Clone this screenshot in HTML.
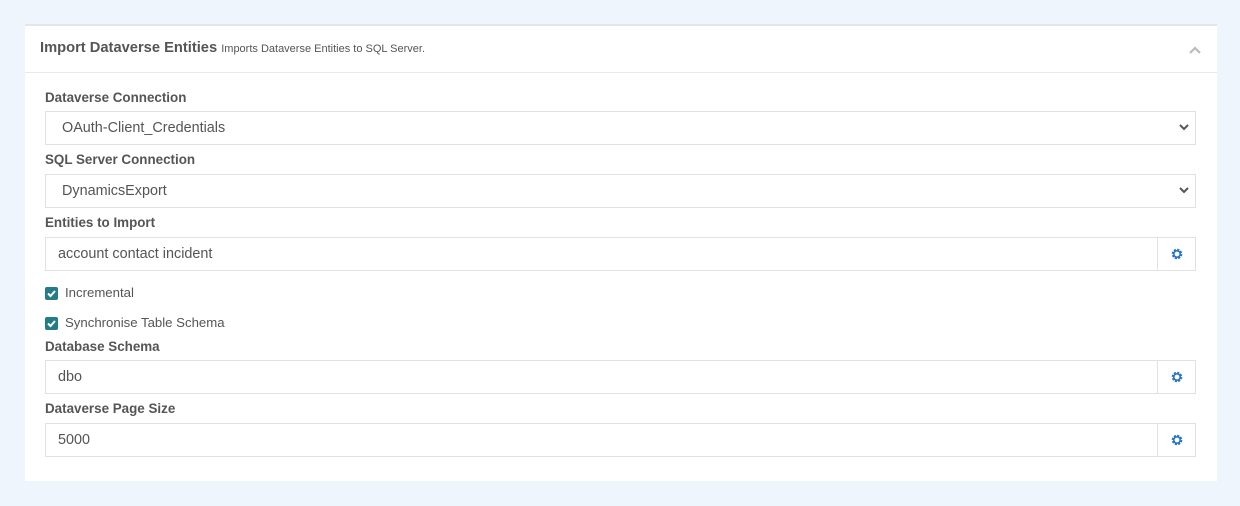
<!DOCTYPE html>
<html><head><style>
body{margin:0;background:#eef5fd;font-family:"Liberation Sans",sans-serif;width:1240px;height:506px;position:relative;overflow:hidden}
.card{position:absolute;left:25px;top:24px;width:1192px;height:455px;background:#fff;border-top:2px solid #e3e7ec}
.hdr{position:absolute;left:0;top:0;width:1192px;height:46px;border-bottom:1px solid #e6e9ed}
.t{position:absolute;left:15px;top:14px;font-size:14.7px;font-weight:bold;color:#555}
.t span{font-weight:normal;font-size:11px;color:#555}
.chev{position:absolute;left:1164px;top:20px}
.lab{position:absolute;left:20px;font-size:13.4px;font-weight:bold;color:#555}
.inp{position:absolute;left:20px;width:1149px;height:32px;border:1px solid #e1e1e1;font-size:14.4px;color:#555;line-height:32px;box-sizing:content-box}
.inp .v{position:absolute;left:12px;top:0}
.sel .v{left:16px}
.sel svg{position:absolute;right:6px;top:12px}
.add{position:absolute;right:0;top:0;width:37px;height:32px;border-left:1px solid #e1e1e1}
.add svg{position:absolute;left:13px;top:10px}
.cb{position:absolute;left:20px;font-size:13.2px;color:#555}
.cb i{position:absolute;left:0;top:0;width:13px;height:13px;background:#237c87;border-radius:2px}
.cb span{position:absolute;left:20px;top:-2px;white-space:nowrap}
</style></head><body>
<div class="card">
<div class="hdr"><div class="t">Import Dataverse Entities <span>Imports Dataverse Entities to SQL Server.</span></div>
<svg class="chev" width="12" height="8" viewBox="0 0 12 8"><path d="M1 7L6 2L11 7" stroke="#bbb" stroke-width="2.2" fill="none"/></svg></div>
<div class="lab" style="top:64px">Dataverse Connection</div>
<div class="inp sel" style="top:85px"><span class="v">OAuth-Client_Credentials</span><svg width="10" height="7" viewBox="0 0 10 7"><path d="M1 1L5 5L9 1" stroke="#555" stroke-width="2" fill="none"/></svg></div>
<div class="lab" style="top:126px">SQL Server Connection</div>
<div class="inp sel" style="top:148px"><span class="v">DynamicsExport</span><svg width="10" height="7" viewBox="0 0 10 7"><path d="M1 1L5 5L9 1" stroke="#555" stroke-width="2" fill="none"/></svg></div>
<div class="lab" style="top:189px">Entities to Import</div>
<div class="inp" style="top:211px"><span class="v">account contact incident</span><div class="add"><svg width="12" height="12" viewBox="0 0 12 12"><circle cx="6" cy="6" r="4" fill="none" stroke="#2a74c4" stroke-width="2.6" stroke-dasharray="2 1.14"/><circle cx="6" cy="6" r="3.2" fill="none" stroke="#2a74c4" stroke-width="1.6"/></svg></div></div>
<div class="cb" style="top:261px"><i><svg width="13" height="13" viewBox="0 0 13 13"><path d="M3 6.5L5.5 9L10 4" stroke="#fff" stroke-width="2" fill="none"/></svg></i><span>Incremental</span></div>
<div class="cb" style="top:291px"><i><svg width="13" height="13" viewBox="0 0 13 13"><path d="M3 6.5L5.5 9L10 4" stroke="#fff" stroke-width="2" fill="none"/></svg></i><span>Synchronise Table Schema</span></div>
<div class="lab" style="top:313px">Database Schema</div>
<div class="inp" style="top:334px"><span class="v">dbo</span><div class="add"><svg width="12" height="12" viewBox="0 0 12 12"><circle cx="6" cy="6" r="4" fill="none" stroke="#2a74c4" stroke-width="2.6" stroke-dasharray="2 1.14"/><circle cx="6" cy="6" r="3.2" fill="none" stroke="#2a74c4" stroke-width="1.6"/></svg></div></div>
<div class="lab" style="top:375px">Dataverse Page Size</div>
<div class="inp" style="top:397px"><span class="v">5000</span><div class="add"><svg width="12" height="12" viewBox="0 0 12 12"><circle cx="6" cy="6" r="4" fill="none" stroke="#2a74c4" stroke-width="2.6" stroke-dasharray="2 1.14"/><circle cx="6" cy="6" r="3.2" fill="none" stroke="#2a74c4" stroke-width="1.6"/></svg></div></div>
</div>
</body></html>
